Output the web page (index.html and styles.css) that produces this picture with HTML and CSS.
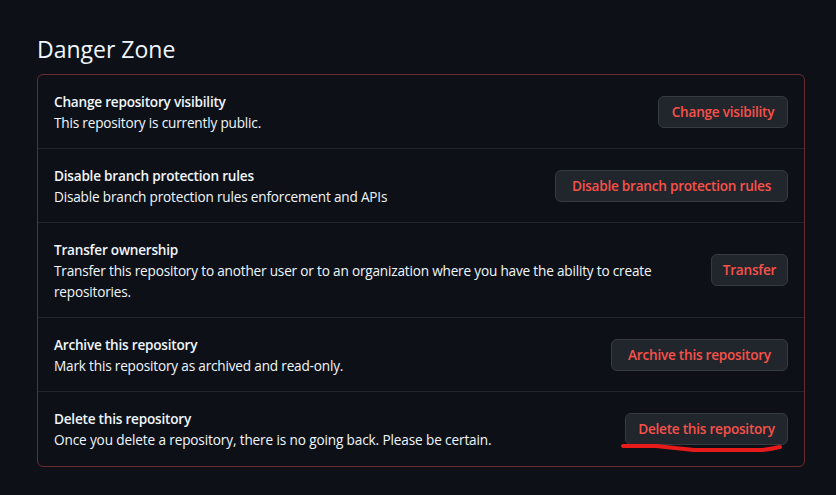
FILE: index.html
```html
<!DOCTYPE html>
<html lang="en">
<head>
<meta charset="utf-8">
<title>Danger Zone</title>
<link rel="stylesheet" href="styles.css">
</head>
<body>
<main class="settings">
<h2 class="title">Danger Zone</h2>
<ul class="box">
<li class="row"><div class="info"><strong>Change repository visibility</strong><p>This repository is currently public.</p></div><button class="btn w1">Change visibility</button></li>
<li class="row"><div class="info"><strong>Disable branch protection rules</strong><p>Disable branch protection rules enforcement and APIs</p></div><button class="btn w2">Disable branch protection rules</button></li>
<li class="row"><div class="info"><strong>Transfer ownership</strong><p>Transfer this repository to another user or to an organization where you have the ability to create<br>repositories.</p></div><button class="btn w3">Transfer</button></li>
<li class="row"><div class="info"><strong>Archive this repository</strong><p>Mark this repository as archived and read-only.</p></div><button class="btn w4">Archive this repository</button></li>
<li class="row"><div class="info"><strong>Delete this repository</strong><p class="warning">Once you delete a repository, there is no going back. Please be certain.</p></div><div class="marked"><button class="btn w5">Delete this repository</button><svg class="stroke" width="170" height="14" viewBox="0 0 170 14"><path d="M4 6H37L75 10H142Q150 9.500 161 7" fill="none" stroke="#e81a1a" stroke-width="4" stroke-linecap="round" stroke-linejoin="round"/></svg></div></li>
</ul>
</main>
</body>
</html>
```
FILE: styles.css
```css
* { box-sizing: border-box; }
body { margin: 0; background: #0d1117; color: #f0f6fc; font: 13.6px/21px "Open Sans", "Noto Sans", sans-serif; }
.settings { padding: 31px 31px 0 37px; }
.title { margin: 0 0 7px; font-size: 23px; line-height: 36px; font-weight: 400; }
.box { margin: 0; padding: 0; list-style: none; border: 1px solid #6b2b2d; border-radius: 6px; }
.row { display: flex; align-items: center; justify-content: space-between; padding: 16px 16px 15px; border-top: 1px solid #21262d; }
.row:first-child { border-top: 0; }
.row:last-child { padding-bottom: 16px; }
.info { white-space: nowrap; }
.info p { margin: 0; letter-spacing: -0.185px; }
.info .warning { letter-spacing: -0.13px; }
.info strong { display: block; font-weight: 600; letter-spacing: -0.22px; }
.btn { height: 32px; padding: 0; border: 1px solid #363b42; border-radius: 6px; background: #21262d; color: #f85149; font: 600 13.6px/20px "Open Sans", sans-serif; letter-spacing: -0.24px; white-space: nowrap; }
.w1 { width: 130px; }
.w2 { width: 233px; }
.w3 { width: 77px; margin-bottom: 1px; }
.w4 { width: 177px; }
.w5 { width: 163px; }
.marked { position: relative; display: flex; }
.stroke { position: absolute; left: -6px; top: 27px; }
```
